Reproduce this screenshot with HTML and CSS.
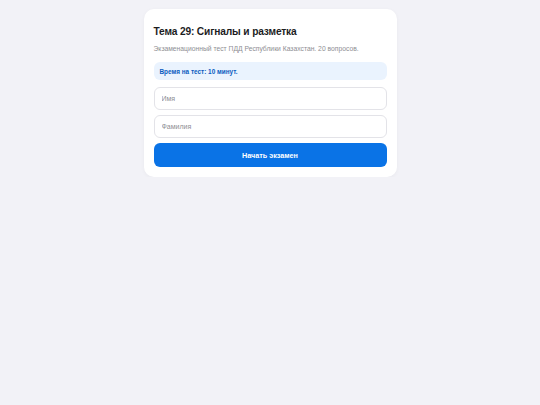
FILE: index.html
```html
<!DOCTYPE html>
<html lang="ru">
<head>
<meta charset="utf-8">
<link rel="stylesheet" href="styles.css">
</head>
<body>
<div class="card">
  <h1 class="title">Тема 29: Сигналы и разметка</h1>
  <p class="subtitle">Экзаменационный тест ПДД Республики Казахстан. 20 вопросов.</p>
  <div class="info">Время на тест: 10 минут.</div>
  <input class="field" type="text" placeholder="Имя">
  <input class="field" type="text" placeholder="Фамилия">
  <button class="start">Начать экзамен</button>
</div>
</body>
</html>
```

FILE: styles.css
```css
html, body {
  margin: 0;
  padding: 0;
  background: #f2f2f7;
  font-family: "Liberation Sans", Arial, sans-serif;
}
body {
  padding-top: 9px;
}
.card {
  width: 253px;
  margin: 0 auto;
  box-sizing: border-box;
  background: #ffffff;
  border-radius: 10px;
  padding: 16px 10px 10px;
  display: flex;
  flex-direction: column;
  box-shadow: 0 1px 4px rgba(0,0,0,0.04);
}
.title {
  margin: 0;
  font-size: 10.2px;
  line-height: 13px;
  letter-spacing: -0.15px;
  font-weight: 700;
  color: #1c1c1e;
}
.subtitle {
  margin: 6px 0 0;
  font-size: 6.75px;
  line-height: 9px;
  color: #8e8e93;
}
.info {
  margin-top: 9px;
  height: 18px;
  box-sizing: border-box;
  padding: 0 6px;
  display: flex;
  align-items: center;
  background: #eaf3fe;
  border-radius: 6px;
  color: #0a5cc0;
  font-size: 6.4px;
  font-weight: 700;
}
.field {
  margin: 7px 0 0;
  height: 23px;
  box-sizing: border-box;
  border: 1px solid #e3e3e8;
  border-radius: 6px;
  padding: 0 7px;
  font-family: inherit;
  font-size: 7px;
  color: #1c1c1e;
  background: #fff;
  outline: none;
}
.field + .field {
  margin-top: 5px;
}
.field::placeholder {
  color: #8e8e93;
}
.start {
  margin-top: 5px;
  height: 24px;
  border: none;
  border-radius: 6px;
  background: #0a73e6;
  color: #fff;
  font-family: inherit;
  font-size: 7.2px;
  font-weight: 700;
}
```
